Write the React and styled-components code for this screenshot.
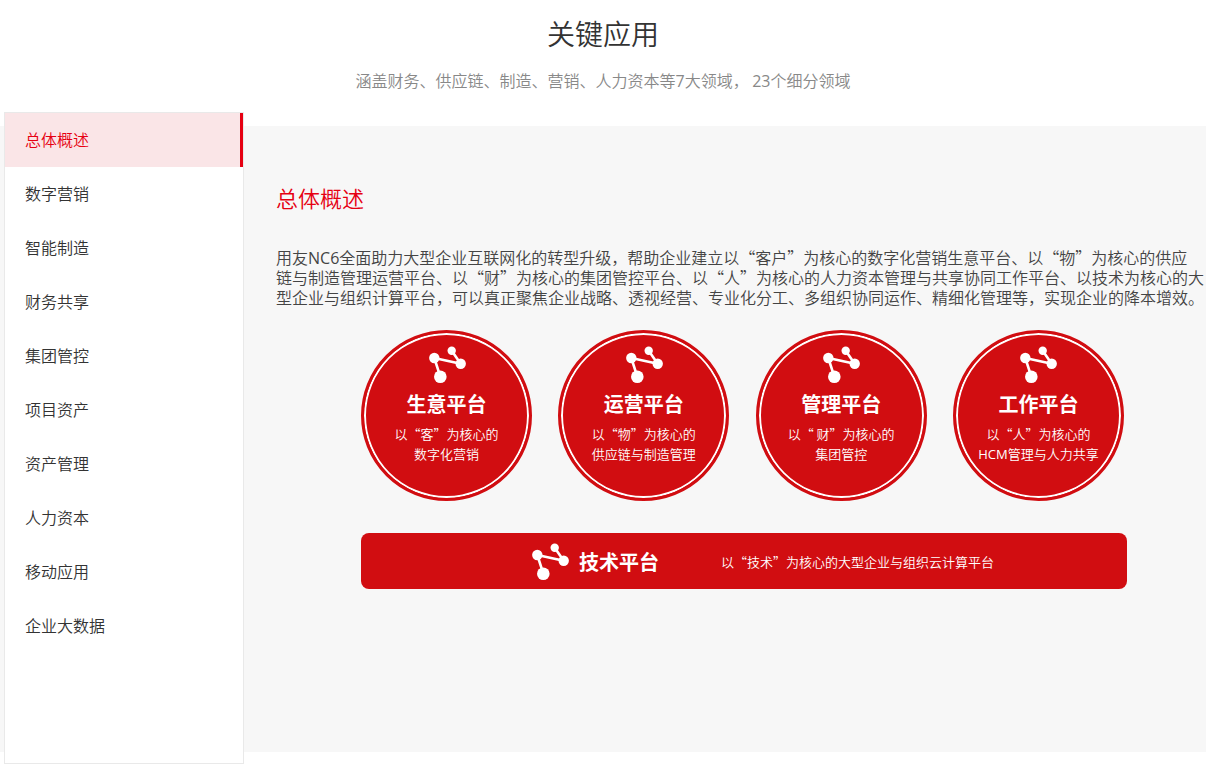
import { useState } from "react";
import styled, { createGlobalStyle } from "styled-components";

const GlobalStyle = createGlobalStyle`
  * {
    box-sizing: border-box;
  }
  body {
    margin: 0;
    background: #fff;
    color: #333;
    font-family: "Noto Sans CJK SC", sans-serif;
    font-size: 16px;
    font-weight: 350;
  }
  h1, h2, h3, p, ul {
    margin: 0;
    padding: 0;
    font-weight: inherit;
  }
`;

const Page = styled.div`
  padding-bottom: 19px;
`;

const Header = styled.header`
  padding: 13px 0 26px;
  text-align: center;
`;

const PageTitle = styled.h1`
  font-size: 28px;
  line-height: 40px;
`;

const SubTitle = styled.p`
  margin-top: 15px;
  color: #888;
  line-height: 24px;
`;

const Latin = styled.span`
  font-family: "Open Sans", sans-serif;
  font-weight: 400;
  line-height: 1;
`;

// grey band, the side menu sticks out of it at both ends
const Band = styled.section`
  display: flex;
  margin-top: 8px;
  padding-left: 4px;
  min-height: 626px;
  background: #f7f7f7;
`;

const SideMenu = styled.ul`
  flex: 0 0 240px;
  margin: -14px 0 -12px;
  border: 1px solid #e9e9e9;
  background: #fff;
  list-style: none;
`;

const MenuLink = styled.a`
  display: block;
  padding: 0 20px 2px;
  line-height: 52px;
  text-decoration: none;
  color: ${({ $active }) => ($active ? "#e60012" : "#333")};
  background: ${({ $active }) => ($active ? "#fae5e7" : "transparent")};
  border-right: 3px solid
    ${({ $active }) => ($active ? "#e60012" : "transparent")};
`;

const Content = styled.div`
  flex: 1;
  min-width: 0;
  padding: 55px 0 0 32px;
`;

const ContentTitle = styled.h2`
  color: #e60012;
  font-size: 22px;
  line-height: 32px;
`;

const Intro = styled.p`
  margin-top: 34px;
  color: #444;
  line-height: 20px;
  white-space: nowrap;
`;

const Platforms = styled.div`
  max-width: 851px;
  margin-top: 23px;
  padding-left: 85px;
`;

const CircleRow = styled.div`
  display: flex;
  justify-content: space-between;
  padding-right: 3px;
`;

const Circle = styled.article`
  display: flex;
  flex-direction: column;
  align-items: center;
  width: 171px;
  height: 171px;
  padding-top: 13px;
  border: 3px solid #d10d11;
  border-radius: 50%;
  background: #d10d11;
  box-shadow: inset 0 0 0 2px #fff;
  color: #fff;
`;

const PlatformName = styled.h3`
  font-size: 20px;
  font-weight: 700;
  line-height: 28px;
`;

const CircleName = styled(PlatformName)`
  margin-top: 6px;
`;

const PlatformText = styled.p`
  font-size: 13px;
  line-height: 20px;
  text-align: center;
  white-space: nowrap;
`;

const CircleText = styled(PlatformText)`
  margin-top: 6px;
`;

const Bar = styled.article`
  display: flex;
  align-items: center;
  height: 56px;
  margin-top: 32px;
  padding: 2px 0 0 170px;
  border-radius: 8px;
  background: #d10d11;
  color: #fff;
`;

const BarName = styled(PlatformName)`
  margin: 0 62px 0 10px;
`;

const menu = [
  "总体概述",
  "数字营销",
  "智能制造",
  "财务共享",
  "集团管控",
  "项目资产",
  "资产管理",
  "人力资本",
  "移动应用",
  "企业大数据",
];

const platforms = [
  { name: "生意平台", core: "以“客”为核心的", area: "数字化营销" },
  { name: "运营平台", core: "以“物”为核心的", area: "供应链与制造管理" },
  { name: "管理平台", core: "以“ 财”为核心的", area: "集团管控" },
  {
    name: "工作平台",
    core: "以“人”为核心的",
    area: (
      <>
        <Latin>HCM</Latin>管理与人力共享
      </>
    ),
  },
];

// four linked nodes
const NodesIcon = () => (
  <svg width="38" height="38" viewBox="0 0 38 38" fill="#fff" aria-hidden="true">
    <path
      d="M12.3 30.7 6.3 12l26.4 5.7-9-13"
      fill="none"
      stroke="#fff"
      strokeWidth="2.6"
      strokeLinejoin="round"
    />
    <circle cx="12.3" cy="30.7" r="6.3" />
    <circle cx="6.3" cy="12" r="5.2" />
    <circle cx="32.7" cy="17.7" r="5.2" />
    <circle cx="23.7" cy="4.7" r="4.2" />
  </svg>
);

const App = () => {
  const [active, setActive] = useState(0);

  const select = (event, index) => {
    event.preventDefault();
    setActive(index);
  };

  return (
    <Page lang="zh-CN">
      <GlobalStyle />
      <Header>
        <PageTitle>关键应用</PageTitle>
        <SubTitle>
          涵盖财务、供应链、制造、营销、人力资本等<Latin>7</Latin>大领域，{" "}
          <Latin>23</Latin>个细分领域
        </SubTitle>
      </Header>
      <Band>
        <SideMenu>
          {menu.map((label, index) => (
            <li key={label}>
              <MenuLink
                href="#"
                $active={index === active}
                onClick={(event) => select(event, index)}
              >
                {label}
              </MenuLink>
            </li>
          ))}
        </SideMenu>
        <Content>
          <ContentTitle>总体概述</ContentTitle>
          <Intro>
            用友<Latin>NC6</Latin>
            全面助力大型企业互联网化的转型升级，帮助企业建立以“客户”为核心的数字化营销生意平台、以“物”为核心的供应
            <br />
            链与制造管理运营平台、以“财”为核心的集团管控平台、以“人”为核心的人力资本管理与共享协同工作平台、以技术为核心的大
            <br />
            型企业与组织计算平台，可以真正聚焦企业战略、透视经营、专业化分工、多组织协同运作、精细化管理等，实现企业的降本增效。
          </Intro>
          <Platforms>
            <CircleRow>
              {platforms.map(({ name, core, area }) => (
                <Circle key={name}>
                  <NodesIcon />
                  <CircleName>{name}</CircleName>
                  <CircleText>
                    {core}
                    <br />
                    {area}
                  </CircleText>
                </Circle>
              ))}
            </CircleRow>
            <Bar>
              <NodesIcon />
              <BarName>技术平台</BarName>
              <PlatformText>以“技术”为核心的大型企业与组织云计算平台</PlatformText>
            </Bar>
          </Platforms>
        </Content>
      </Band>
    </Page>
  );
};

export default App;
